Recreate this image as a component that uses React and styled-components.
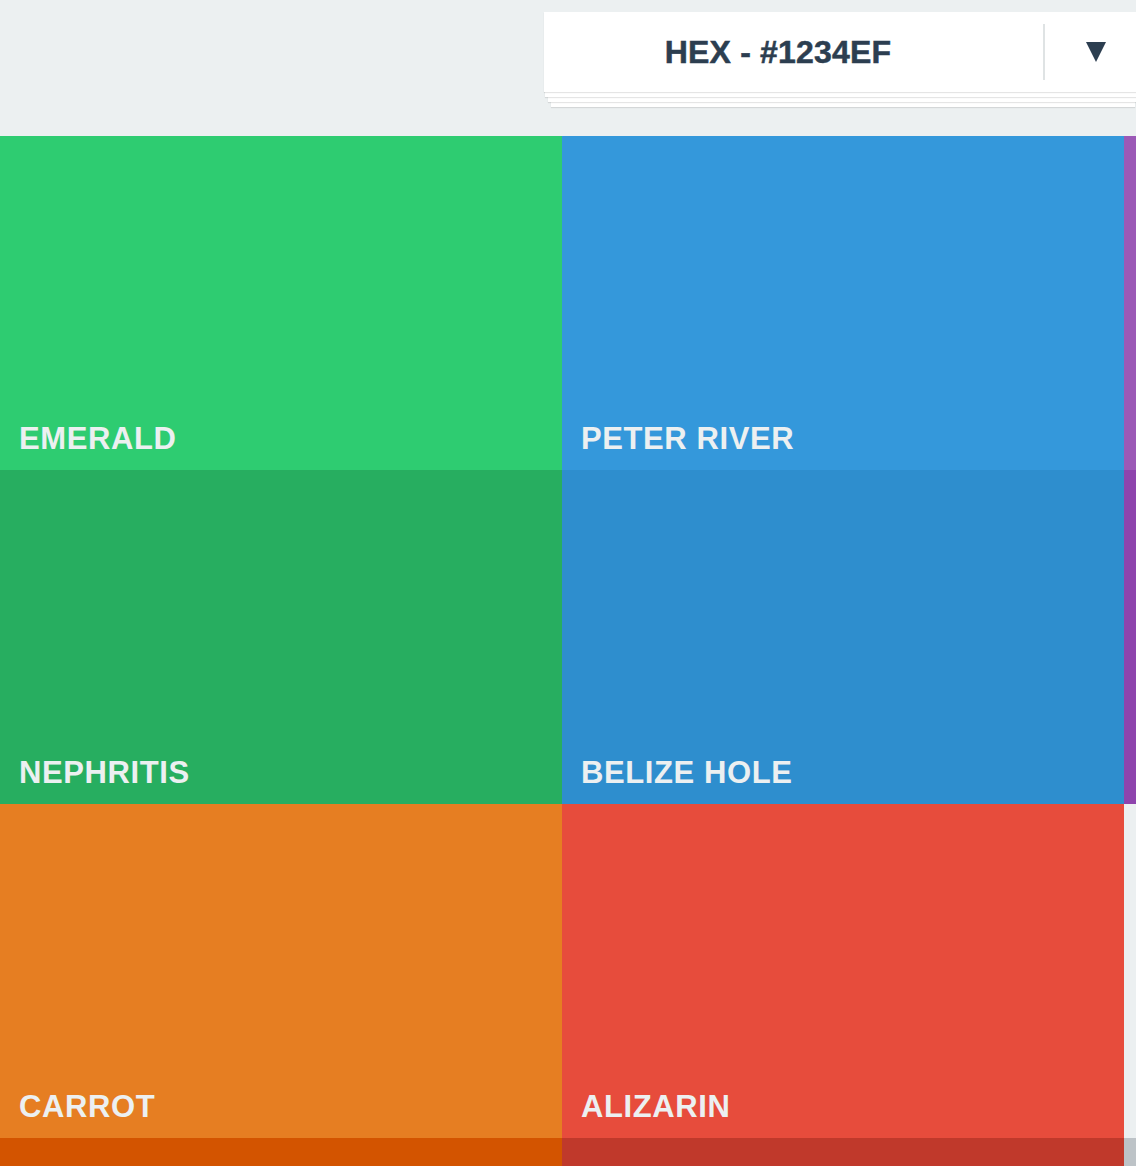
import React from 'react'
import styled, { createGlobalStyle } from 'styled-components'

const GlobalStyle = createGlobalStyle`
    html, body {
        margin: 0;
        padding: 0;
        background-color: #ecf0f1;
        overflow: hidden;
    }
    * {
        box-sizing: border-box;
    }
`;

const colors = [
    { name: 'Emerald', hex: '#2ecc71' },
    { name: 'Peter River', hex: '#3498db' },
    { name: 'Amethyst', hex: '#9b59b6' },
    { name: 'Nephritis', hex: '#27ae60' },
    { name: 'Belize Hole', hex: '#2e8ece' },
    { name: 'Wisteria', hex: '#8e44ad' },
    { name: 'Carrot', hex: '#e67e22' },
    { name: 'Alizarin', hex: '#e74c3c' },
    { name: 'Clouds', hex: '#ecf0f1', dark: true },
    { name: 'Pumpkin', hex: '#d35400' },
    { name: 'Pomegranate', hex: '#c0392b' },
    { name: 'Silver', hex: '#bdc3c7' },
];

export default function App() {
    return (
        <Page>
            <GlobalStyle />
            <Header>
                <Select>
                    <SelectLabel>HEX - #1234EF</SelectLabel>
                    <Divider />
                    <Arrow>
                        <svg width="20" height="20" viewBox="0 0 20 20">
                            <polygon points="0,0 20,0 10,20" fill="#2c3e50" />
                        </svg>
                    </Arrow>
                </Select>
            </Header>
            <Grid>
                {colors.map(c => (
                    <Tile key={c.name} color={c.hex}>
                        <TileName dark={c.dark}>{c.name}</TileName>
                    </Tile>
                ))}
            </Grid>
        </Page>
    )
}

const Page = styled.div`
    width: 1686px;
    font-family: "Liberation Sans", Arial, sans-serif;
`;

const Header = styled.div`
    height: 136px;
    display: flex;
    justify-content: center;
    padding-top: 12px;
`;

const Select = styled.div`
    width: 598px;
    height: 80px;
    background-color: #fff;
    display: flex;
    align-items: center;
    box-shadow:
        0 1px 1px rgba(0, 0, 0, 0.1),
        0 6px 0 -1px #fff,
        0 7px 1px -1px rgba(0, 0, 0, 0.1),
        0 14px 0 -4px #fff,
        0 15px 1px -4px rgba(0, 0, 0, 0.1),
        0 22px 0 -7px #fff,
        0 23px 1px -7px rgba(0, 0, 0, 0.1);
`;

const SelectLabel = styled.div`
    flex: 1;
    text-align: center;
    padding-right: 31px;
    font-size: 32px;
    font-weight: 700;
    letter-spacing: 0.2px;
    color: #2c3e50;
    -webkit-text-stroke: 0.5px #2c3e50;
`;

const Divider = styled.div`
    width: 2px;
    height: 56px;
    background-color: #dfe3e4;
`;

const Arrow = styled.div`
    width: 97px;
    display: flex;
    justify-content: center;
    align-items: center;
    padding-left: 4px;
`;

const Grid = styled.div`
    display: grid;
    grid-template-columns: repeat(3, 562px);
    grid-auto-rows: 334px;
`;

const Tile = styled.div`
    background-color: ${props => props.color};
    display: flex;
    align-items: flex-end;
    padding: 0 19px 13px;
`;

const TileName = styled.h2`
    margin: 0;
    font-size: 31px;
    font-weight: 700;
    text-transform: uppercase;
    letter-spacing: 0.6px;
    color: ${props => props.dark ? '#bdc3c7' : '#ecf0f1'};
`;
